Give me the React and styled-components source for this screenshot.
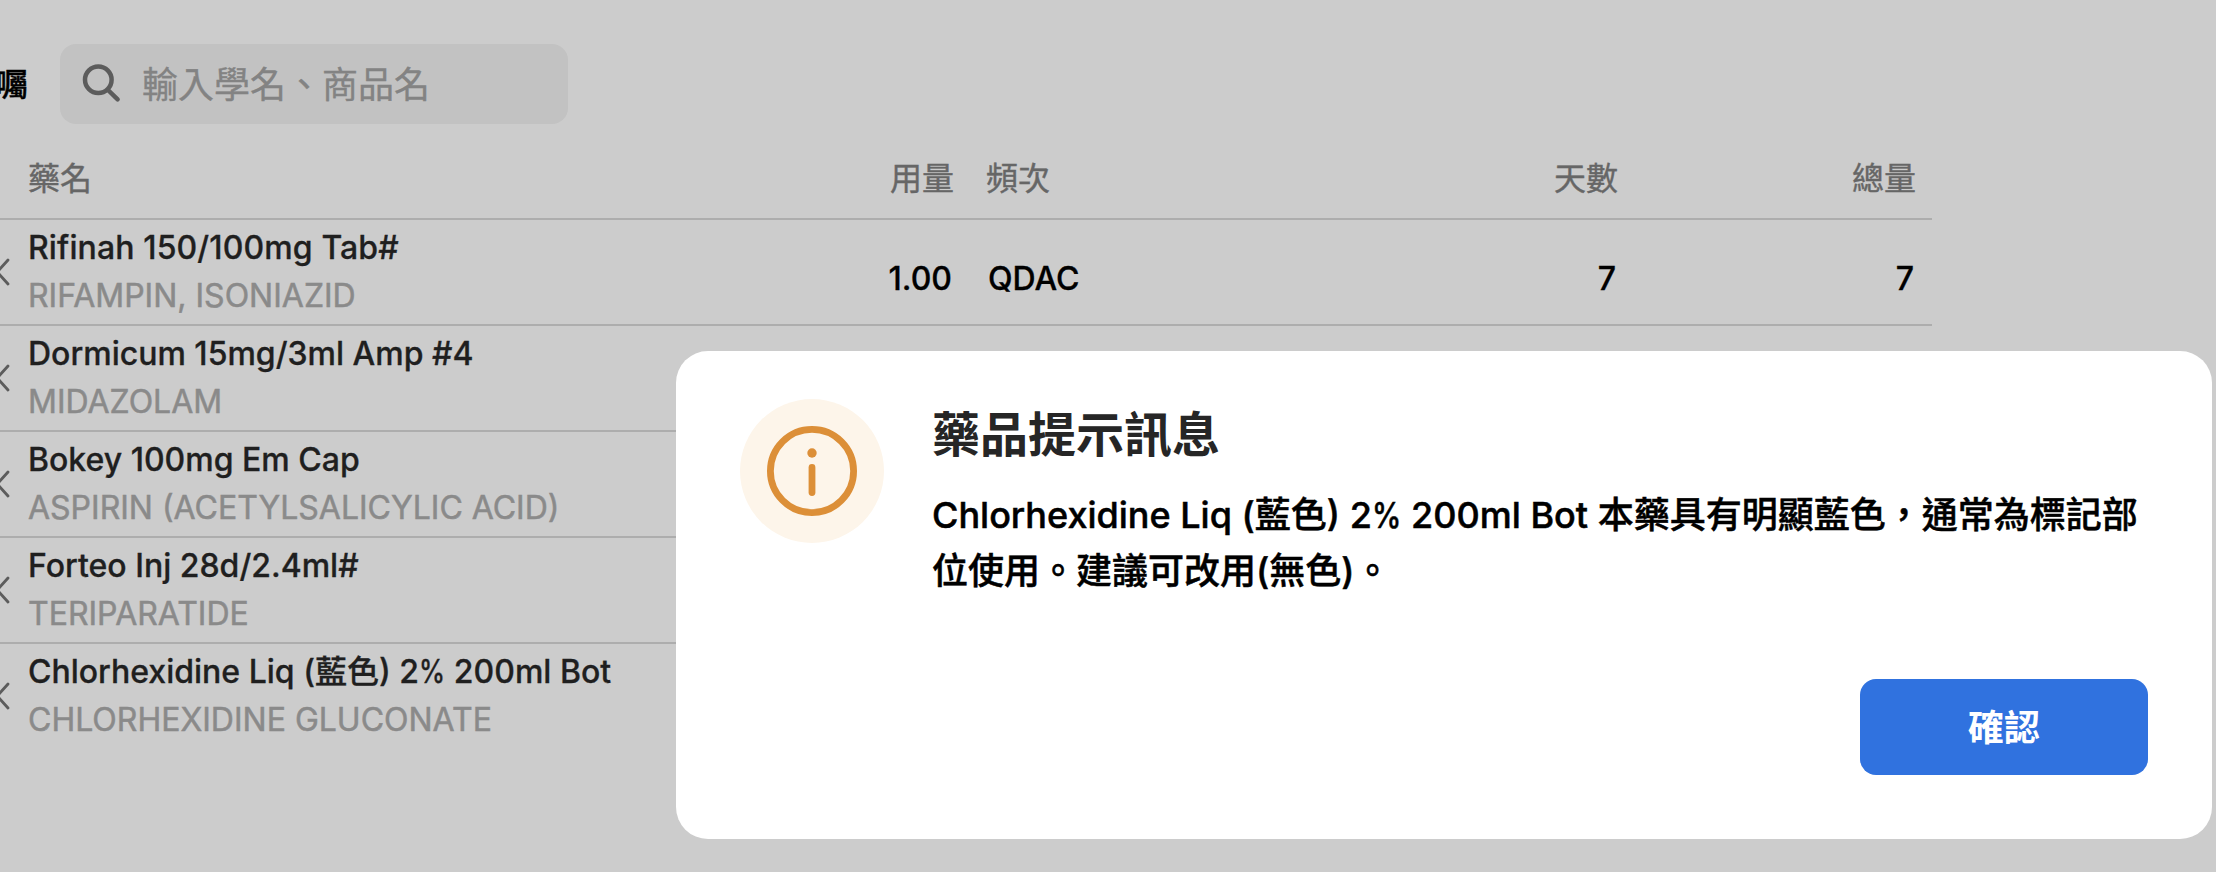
import React from 'react';
import styled, { createGlobalStyle } from 'styled-components';

const GlobalStyle = createGlobalStyle`
  * { box-sizing: border-box; }
  body {
    margin: 0;
    background: #cccccc;
    overflow: hidden;
    font-family: Inter, "Noto Sans CJK TC", sans-serif;
    font-size: 32px;
  }
`;

const Page = styled.div`
  position: relative;
  width: 2216px;
  height: 872px;
  overflow: hidden;
`;

const Toolbar = styled.header`
  display: flex;
  align-items: center;
  height: 124px;
  padding-top: 44px;
`;

const ToolbarLabel = styled.div`
  display: flex;
  justify-content: flex-end;
  flex: none;
  width: 28px;
  margin-right: 32px;
  padding-bottom: 4px;
  font-weight: 500;
  color: #000;
  -webkit-text-stroke: 0.4px;
  white-space: nowrap;
`;

const SearchBox = styled.label`
  display: flex;
  align-items: center;
  gap: 18px;
  width: 508px;
  height: 80px;
  padding-left: 20px;
  border-radius: 16px;
  background: #c2c2c2;
`;

const Placeholder = styled.span`
  padding-bottom: 4px;
  color: #838383;
  font-size: 36px;
  -webkit-text-stroke: 0.4px;
`;

const Table = styled.main`
  width: 1932px;
`;

const Row = styled.div`
  display: grid;
  grid-template-columns: 28px 800px 126px 32px 632px 298px;
  height: 106px;
  border-bottom: 2px solid ${(p) => (p.$last ? 'transparent' : '#adadad')};
`;

const HeadRow = styled(Row)`
  height: 96px;
  align-items: center;
  padding-top: 10px;
  color: #666666;
  -webkit-text-stroke: 0.4px;
`;

const Cell = styled.div`
  grid-row: 1;
  grid-column: ${(p) => p.$col};
  text-align: ${(p) => (p.$right ? 'right' : 'left')};
  align-self: center;
  white-space: nowrap;
`;

const Value = styled(Cell)`
  padding: 12px ${(p) => (p.$right ? '2px' : '0')} 0 ${(p) => (p.$right ? '0' : '2px')};
  font-weight: 500;
  color: #000;
  -webkit-text-stroke: 0.3px;
`;

const Chevron = styled.svg`
  width: 12px;
  height: 28px;
  margin-top: 38px;
`;

const Drug = styled.div`
  padding-top: 4px;
  line-height: 48px;
  white-space: nowrap;
`;

const DrugName = styled.div`
  font-weight: 500;
  color: #1f1f1f;
  letter-spacing: ${(p) => p.$tracking || 0}px;
  -webkit-text-stroke: 0.3px;
`;

const Generic = styled.div`
  color: #8a8a8a;
  -webkit-text-stroke: 0.5px;
`;

const Percent = styled.span`
  display: inline-block;
  margin-right: -0.17em;
  transform: scaleX(0.82);
  transform-origin: left;
`;

const Dialog = styled.section`
  position: absolute;
  left: 676px;
  top: 351px;
  display: flex;
  flex-direction: column;
  justify-content: space-between;
  width: 1536px;
  height: 488px;
  padding: 48px 64px 64px;
  border-radius: 32px;
  background: #fff;
`;

const DialogBody = styled.div`
  display: flex;
  gap: 48px;
`;

const IconDisc = styled.div`
  display: flex;
  flex: none;
  align-items: center;
  justify-content: center;
  width: 144px;
  height: 144px;
  border-radius: 50%;
  background: #fdf5ea;
`;

const Title = styled.h2`
  margin: 0 0 16px;
  font-size: 48px;
  line-height: 72px;
  font-weight: 700;
  color: #262626;
`;

const Message = styled.p`
  margin: 0;
  font-size: 36px;
  line-height: 56px;
  font-weight: 500;
  color: #000;
  -webkit-text-stroke: 0.5px;
  white-space: nowrap;
`;

const ConfirmButton = styled.button`
  align-self: flex-end;
  width: 288px;
  height: 96px;
  padding: 0 0 4px;
  border: 0;
  border-radius: 16px;
  background: #3072df;
  color: #fff;
  font: 700 36px Inter, "Noto Sans CJK TC", sans-serif;
`;

const chlorhexidine = (
  <>
    Chlorhexidine Liq (藍色) 2<Percent>%</Percent> 200ml Bot
  </>
);

const drugs = [
  { name: 'Rifinah 150/100mg Tab#', tracking: 0.12, generic: 'RIFAMPIN, ISONIAZID', dose: '1.00', freq: 'QDAC', days: 7, total: 7 },
  { name: 'Dormicum 15mg/3ml Amp #4', generic: 'MIDAZOLAM' },
  { name: 'Bokey 100mg Em Cap', generic: 'ASPIRIN (ACETYLSALICYLIC ACID)' },
  { name: 'Forteo Inj 28d/2.4ml#', generic: 'TERIPARATIDE' },
  { name: chlorhexidine, generic: 'CHLORHEXIDINE GLUCONATE' },
];

export default function App() {
  return (
    <Page>
      <GlobalStyle />
      <Toolbar>
        <ToolbarLabel>囑</ToolbarLabel>
        <SearchBox>
          <svg width="44" height="44" viewBox="0 0 44 44" fill="none" stroke="#5c5c5c" strokeWidth="4.5" strokeLinecap="round">
            <circle cx="18.3" cy="17.7" r="13.3" />
            <path d="M28 28 37.6 37.4" />
          </svg>
          <Placeholder>輸入學名、商品名</Placeholder>
        </SearchBox>
      </Toolbar>
      <Table>
        <HeadRow>
          <Cell $col={2}>藥名</Cell>
          <Cell $col={3} $right>用量</Cell>
          <Cell $col={5}>頻次</Cell>
          <Cell $col={5} $right>天數</Cell>
          <Cell $col={6} $right>總量</Cell>
        </HeadRow>
        {drugs.map((d, i) => (
          <Row key={d.generic} $last={i === drugs.length - 1}>
            <Chevron viewBox="0 0 12 28" fill="none" stroke="#5c5c5c" strokeWidth="2.8" strokeLinecap="round">
              <path d="M8 2-2.8 14 8 26" />
            </Chevron>
            <Drug>
              <DrugName $tracking={d.tracking}>{d.name}</DrugName>
              <Generic>{d.generic}</Generic>
            </Drug>
            <Value $col={3} $right>{d.dose}</Value>
            <Value $col={5}>{d.freq}</Value>
            <Value $col={5} $right>{d.days}</Value>
            <Value $col={6} $right>{d.total}</Value>
          </Row>
        ))}
      </Table>
      <Dialog role="dialog">
        <DialogBody>
          <IconDisc>
            <svg width="96" height="96" viewBox="0 0 96 96" fill="none" stroke="#dc8f38" strokeWidth="6.8" strokeLinecap="round">
              <circle cx="48" cy="48" r="41.6" />
              <path d="M48 44.5V69.5" />
              <circle cx="48" cy="30" r="4.7" fill="#dc8f38" stroke="none" />
            </svg>
          </IconDisc>
          <div>
            <Title>藥品提示訊息</Title>
            <Message>
              {chlorhexidine} 本藥具有明顯藍色，通常為標記部
              <br />
              位使用。建議可改用(無色)。
            </Message>
          </div>
        </DialogBody>
        <ConfirmButton>確認</ConfirmButton>
      </Dialog>
    </Page>
  );
}
